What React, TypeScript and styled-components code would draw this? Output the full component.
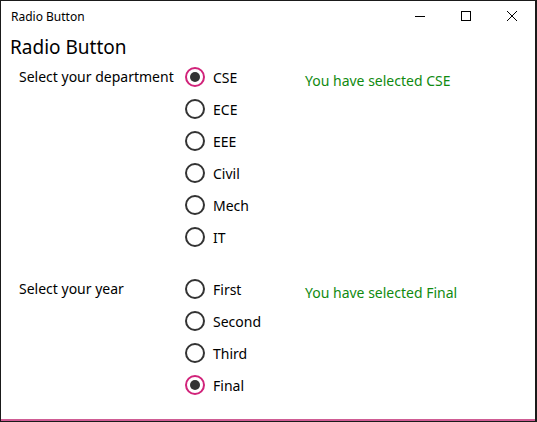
import React, { useState } from "react";
import styled, { createGlobalStyle } from "styled-components";

const GlobalStyle = createGlobalStyle`
    html, body {
        margin: 0;
        padding: 0;
        background: #ffffff;
    }
    * {
        box-sizing: border-box;
    }
`;

const accent = "#d1237a";
const font = `"Noto Sans", "Open Sans", sans-serif`;

const StyledWindow = styled.div`
    width: 537px;
    height: 422px;
    border: 1px solid #1a1a1a;
    border-right-width: 2px;
    box-shadow: inset 0 -2px 0 #cf5c94;
    display: flex;
    flex-direction: column;
    font-family: ${font};
    color: #000000;
    background: #ffffff;
    overflow: hidden;
`;

const StyledTitleBar = styled.div`
    height: 30px;
    display: flex;
    align-items: center;
    justify-content: space-between;
    flex-shrink: 0;
`;

const StyledTitleText = styled.div`
    padding-left: 10px;
    font-size: 12px;
`;

const StyledControls = styled.div`
    display: flex;
    height: 100%;
`;

const StyledControlButton = styled.div`
    width: 46px;
    height: 100%;
    display: flex;
    align-items: center;
    justify-content: center;
`;

const StyledContent = styled.div`
    padding: 3px 0 0 9px;
`;

const StyledHeading = styled.div`
    font-size: 19px;
    line-height: 26px;
    margin-bottom: 1px;
`;

const StyledGroup = styled.div`
    display: grid;
    grid-template-columns: 166px 120px auto;
    padding-left: 9px;
    margin-bottom: 20px;
`;

const StyledGroupLabel = styled.div`
    font-size: 14px;
    line-height: 32px;
`;

const StyledOptions = styled.div`
    display: flex;
    flex-direction: column;
`;

const StyledOption = styled.label`
    display: flex;
    align-items: center;
    height: 32px;
    font-size: 14px;
    cursor: pointer;
`;

const StyledCircle = styled.span<{ $checked: boolean }>`
    width: 20px;
    height: 20px;
    border-radius: 50%;
    border: 2px solid ${(p) => (p.$checked ? accent : "#333333")};
    display: flex;
    align-items: center;
    justify-content: center;
    margin-right: 8px;
    flex-shrink: 0;
    &::after {
        content: "";
        width: 10px;
        height: 10px;
        border-radius: 50%;
        background: #333333;
        display: ${(p) => (p.$checked ? "block" : "none")};
    }
`;

const StyledResult = styled.div`
    font-size: 14px;
    color: #108a10;
    line-height: 32px;
    padding-top: 4px;
`;

type GroupProps = {
    label: string;
    options: string[];
    value: string;
    onChange: (v: string) => void;
};

const RadioGroup = ({ label, options, value, onChange }: GroupProps) => (
    <StyledGroup>
        <StyledGroupLabel>{label}</StyledGroupLabel>
        <StyledOptions>
            {options.map((o) => (
                <StyledOption key={o} onClick={() => onChange(o)}>
                    <StyledCircle $checked={o === value} />
                    {o}
                </StyledOption>
            ))}
        </StyledOptions>
        <StyledResult>You have selected {value}</StyledResult>
    </StyledGroup>
);

export default function App() {
    const [dept, setDept] = useState("CSE");
    const [year, setYear] = useState("Final");

    return (
        <>
            <GlobalStyle />
            <StyledWindow>
                <StyledTitleBar>
                    <StyledTitleText>Radio Button</StyledTitleText>
                    <StyledControls>
                        <StyledControlButton>
                            <svg width="10" height="10" viewBox="0 0 10 10">
                                <path d="M0 5.5h10" stroke="#000" strokeWidth="1" />
                            </svg>
                        </StyledControlButton>
                        <StyledControlButton>
                            <svg width="10" height="10" viewBox="0 0 10 10">
                                <rect x="0.5" y="0.5" width="9" height="9" fill="none" stroke="#000" strokeWidth="1" />
                            </svg>
                        </StyledControlButton>
                        <StyledControlButton>
                            <svg width="10" height="10" viewBox="0 0 10 10">
                                <path d="M0 0L10 10M10 0L0 10" stroke="#000" strokeWidth="1" />
                            </svg>
                        </StyledControlButton>
                    </StyledControls>
                </StyledTitleBar>
                <StyledContent>
                    <StyledHeading>Radio Button</StyledHeading>
                    <RadioGroup
                        label="Select your department"
                        options={["CSE", "ECE", "EEE", "Civil", "Mech", "IT"]}
                        value={dept}
                        onChange={setDept}
                    />
                    <RadioGroup
                        label="Select your year"
                        options={["First", "Second", "Third", "Final"]}
                        value={year}
                        onChange={setYear}
                    />
                </StyledContent>
            </StyledWindow>
        </>
    );
}
